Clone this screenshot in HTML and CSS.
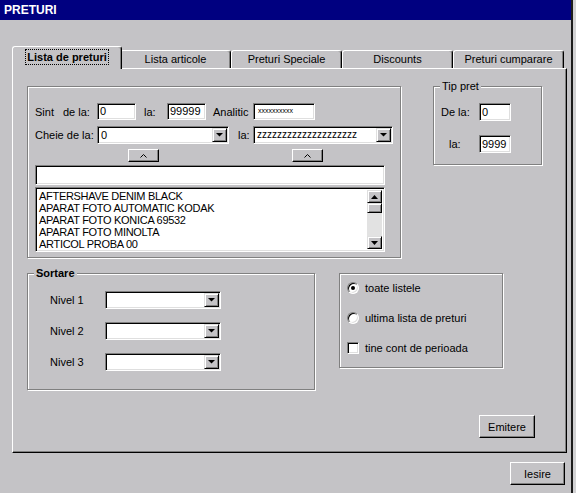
FILE: index.html
```html
<!DOCTYPE html>
<html lang="ro">
<head>
    <meta charset="UTF-8">
    <meta name="viewport" content="width=device-width, initial-scale=1.0">
    <title>PRETURI</title>
    <link rel="stylesheet" href="styles.css">
</head>
<body>
    <div class="window">
        <div class="titlebar">PRETURI</div>

        <div class="client">
            <div class="tabstrip">
                <div class="tab active"><span class="focus">Lista de preturi</span></div>
                <div class="tab">Lista articole</div>
                <div class="tab">Preturi Speciale</div>
                <div class="tab">Discounts</div>
                <div class="tab">Preturi cumparare</div>
            </div>

            <div class="page">
                <div class="top-row">
                    <!-- filtru articole -->
                    <div class="group filter">
                        <div class="row">
                            <span class="lbl-sint">Sint</span>
                            <span class="lbl-dela">de la:</span>
                            <div class="field w39">0</div>
                            <span class="lbl-la">la:</span>
                            <div class="field w39">99999</div>
                            <span class="lbl-analitic">Analitic</span>
                            <div class="field w62 tiny">xxxxxxxxxx</div>
                        </div>
                        <div class="row row-cheie">
                            <span class="lbl-cheie">Cheie de la:</span>
                            <div class="combo w132">
                                <span class="combo-text">0</span>
                                <span class="drop"><svg width="7" height="4" viewBox="0 0 7 4"><polygon points="0,0 7,0 3.5,3.5" fill="#000"/></svg></span>
                            </div>
                            <span class="lbl-la2">la:</span>
                            <div class="combo w140">
                                <span class="combo-text zz">zzzzzzzzzzzzzzzzzzzz</span>
                                <span class="drop"><svg width="7" height="4" viewBox="0 0 7 4"><polygon points="0,0 7,0 3.5,3.5" fill="#000"/></svg></span>
                            </div>
                        </div>
                        <div class="row row-up">
                            <button class="btn up up-1"><svg width="7" height="4" viewBox="0 0 7 4"><polyline points="0.5,3.5 3.5,0.5 6.5,3.5" fill="none" stroke="#000"/></svg></button>
                            <button class="btn up up-2"><svg width="7" height="4" viewBox="0 0 7 4"><polyline points="0.5,3.5 3.5,0.5 6.5,3.5" fill="none" stroke="#000"/></svg></button>
                        </div>
                        <div class="field search"></div>
                        <div class="listbox">
                            <ul class="items">
                                <li>AFTERSHAVE DENIM BLACK</li>
                                <li>APARAT FOTO AUTOMATIC KODAK</li>
                                <li>APARAT FOTO KONICA 69532</li>
                                <li>APARAT FOTO MINOLTA</li>
                                <li>ARTICOL PROBA 00</li>
                            </ul>
                            <div class="scrollbar">
                                <span class="sb-btn"><svg width="7" height="4" viewBox="0 0 7 4"><polygon points="0,4 7,4 3.5,0" fill="#000"/></svg></span>
                                <span class="sb-thumb"></span>
                                <span class="sb-track"></span>
                                <span class="sb-btn"><svg width="7" height="4" viewBox="0 0 7 4"><polygon points="0,0 7,0 3.5,4" fill="#000"/></svg></span>
                            </div>
                        </div>
                    </div>

                    <!-- tip pret -->
                    <div class="group tip">
                        <span class="group-title">Tip pret</span>
                        <div class="row">
                            <span class="lbl-tip">De la:</span>
                            <div class="field w32">0</div>
                        </div>
                        <div class="row">
                            <span class="lbl-tip indent">la:</span>
                            <div class="field w32">9999</div>
                        </div>
                    </div>
                </div>

                <div class="bottom-row">
                    <div class="group sortare">
                        <span class="group-title bold">Sortare</span>
                        <div class="row">
                            <span class="nivel">Nivel 1</span>
                            <div class="combo w116"><span class="combo-text"></span><span class="drop"><svg width="7" height="4" viewBox="0 0 7 4"><polygon points="0,0 7,0 3.5,3.5" fill="#000"/></svg></span></div>
                        </div>
                        <div class="row">
                            <span class="nivel">Nivel 2</span>
                            <div class="combo w116"><span class="combo-text"></span><span class="drop"><svg width="7" height="4" viewBox="0 0 7 4"><polygon points="0,0 7,0 3.5,3.5" fill="#000"/></svg></span></div>
                        </div>
                        <div class="row">
                            <span class="nivel">Nivel 3</span>
                            <div class="combo w116"><span class="combo-text"></span><span class="drop"><svg width="7" height="4" viewBox="0 0 7 4"><polygon points="0,0 7,0 3.5,3.5" fill="#000"/></svg></span></div>
                        </div>
                    </div>

                    <div class="group options">
                        <div class="opt"><span class="radio checked"></span>toate listele</div>
                        <div class="opt"><span class="radio"></span>ultima lista de preturi</div>
                        <div class="opt"><span class="check"></span>tine cont de perioada</div>
                    </div>
                </div>

                <div class="actions">
                    <button class="btn emitere">Emitere</button>
                </div>
            </div>

            <div class="footer">
                <button class="btn iesire">Iesire</button>
            </div>
        </div>
    </div>
</body>
</html>
```

FILE: styles.css
```css
* {
    box-sizing: border-box;
}
html {
    background-color: #d2d2d4;
}
body {
    margin: 0;
    font-family: "Liberation Sans", Arial, sans-serif;
    font-size: 11px;
    color: #000;
}
.window {
    width: 573px;
    height: 493px;
    background-color: #c4c3c6;
    border-right: 2px solid #1c1c1c;
}
.titlebar {
    height: 20px;
    line-height: 20px;
    padding-left: 4px;
    background-color: #000080;
    color: #fff;
    font-size: 12px;
    font-weight: bold;
}
.client {
    padding: 26px 0 0 12px;
}

/* tabs */
.tabstrip {
    display: flex;
    align-items: flex-end;
    height: 22px;
    position: relative;
    z-index: 1;
}
.tab {
    width: 111px;
    height: 18px;
    line-height: 16px;
    text-align: center;
    background-color: #c4c3c6;
    border: 1px solid;
    border-color: #fff #000 transparent #fff;
    border-bottom: 0;
    border-radius: 3px 3px 0 0;
    box-shadow: inset -1px 0 #808080;
}
.tab.active {
    width: 110px;
    height: 23px;
    margin-bottom: -1px;
    margin-right: -2px;
    padding-top: 2px;
    line-height: 15px;
    font-weight: bold;
    position: relative;
    z-index: 2;
}
.focus {
    display: inline-block;
    border: 1px dotted #000;
    padding: 0 1px;
    line-height: 14px;
}

/* tab page */
.page {
    width: 555px;
    height: 385px;
    padding: 17px 0 0 14px;
    border: 1px solid;
    border-color: #fff #000 #000 #fff;
    box-shadow: inset -1px -1px #808080;
}
.top-row,
.bottom-row {
    display: flex;
    align-items: flex-start;
}
.bottom-row {
    margin-top: 15px;
}
.group {
    position: relative;
    border: 1px solid #808080;
    box-shadow: inset 1px 1px #fff, 1px 1px #fff;
}
.group-title {
    position: absolute;
    top: -7px;
    left: 6px;
    padding: 0 2px;
    line-height: 13px;
    background-color: #c4c3c6;
}
.bold {
    font-weight: bold;
}
.row {
    display: flex;
    align-items: center;
}

/* fields */
.field {
    height: 17px;
    line-height: 14px;
    padding: 0 2px;
    background-color: #fff;
    border: 1px solid;
    border-color: #808080 #fff #fff #808080;
    box-shadow: inset 1px 1px #000, inset -1px -1px #dfdfdf;
    white-space: nowrap;
    overflow: hidden;
}
.tiny {
    font-size: 7px;
    padding-left: 4px;
}
.w32 { width: 32px; height: 18px; line-height: 16px; }
.w39 { width: 39px; }
.w62 { width: 62px; }
.w116 { width: 116px; }
.w132 { width: 132px; }
.w140 { width: 140px; }

.combo {
    display: flex;
    height: 18px;
    padding: 1px;
    background-color: #fff;
    border: 1px solid;
    border-color: #808080 #fff #fff #808080;
    box-shadow: inset 1px 1px #000, inset -1px -1px #dfdfdf;
}
.combo-text {
    flex: 1;
    padding-left: 2px;
    line-height: 14px;
    white-space: nowrap;
    overflow: hidden;
}
.zz {
    font-size: 10px;
}
.drop {
    width: 15px;
    display: flex;
    align-items: center;
    justify-content: center;
    background-color: #c4c3c6;
    border: 1px solid;
    border-color: #dfdfdf #000 #000 #dfdfdf;
    box-shadow: inset 1px 1px #fff, inset -1px -1px #808080;
}

/* filter group */
.filter {
    width: 374px;
    height: 172px;
    padding: 16px 0 0 7px;
}
.lbl-sint { width: 28px; }
.lbl-dela { width: 34px; }
.lbl-la { width: 23px; margin-left: 8px; }
.lbl-analitic { width: 40px; margin-left: 7px; }
.lbl-cheie { width: 62px; }
.lbl-la2 { width: 15px; margin-left: 9px; }
.row-cheie {
    margin-top: 6px;
}
.row-up {
    margin-top: 5px;
    height: 13px;
}
.btn {
    height: 23px;
    padding: 0;
    background-color: #c4c3c6;
    font: inherit;
    color: #000;
    border: 1px solid;
    border-color: #fff #000 #000 #fff;
    box-shadow: inset -1px -1px #808080;
}
.up {
    width: 31px;
    height: 13px;
    display: flex;
    align-items: center;
    justify-content: center;
}
.up-1 { margin-left: 93px; }
.up-2 { margin-left: 133px; }
.search {
    width: 350px;
    height: 20px;
    margin-top: 3px;
}
.listbox {
    display: flex;
    width: 350px;
    height: 65px;
    margin-top: 2px;
    padding: 2px;
    background-color: #fff;
    border: 1px solid;
    border-color: #808080 #fff #fff #808080;
    box-shadow: inset 1px 1px #000, inset -1px -1px #dfdfdf;
}
.items {
    flex: 1;
    margin: 0;
    padding: 0 0 0 1px;
    list-style: none;
    line-height: 12px;
    letter-spacing: -0.3px;
    overflow: hidden;
}
.scrollbar {
    width: 15px;
    display: flex;
    flex-direction: column;
}
.sb-btn,
.sb-thumb {
    display: flex;
    align-items: center;
    justify-content: center;
    height: 13px;
    background-color: #c4c3c6;
    border: 1px solid;
    border-color: #dfdfdf #000 #000 #dfdfdf;
    box-shadow: inset 1px 1px #fff, inset -1px -1px #808080;
}
.sb-thumb {
    height: 10px;
}
.sb-track {
    flex: 1;
    background-color: #e2e2e2;
}

/* tip pret */
.tip {
    width: 109px;
    height: 79px;
    margin-left: 32px;
    padding: 16px 0 0 7px;
}
.tip .row + .row {
    margin-top: 14px;
}
.lbl-tip { width: 38px; }
.indent { padding-left: 8px; }

/* sortare */
.sortare {
    width: 288px;
    height: 117px;
    padding: 17px 0 0 22px;
}
.sortare .row + .row {
    margin-top: 13px;
}
.nivel { width: 55px; }

/* optiuni */
.options {
    width: 164px;
    height: 95px;
    margin-left: 24px;
    padding: 7px 0 0 7px;
}
.opt {
    display: flex;
    align-items: center;
    height: 14px;
}
.opt + .opt {
    margin-top: 16px;
}
.radio,
.check {
    width: 12px;
    height: 12px;
    margin-right: 6px;
    display: flex;
    align-items: center;
    justify-content: center;
    background-color: #fff;
    border: 1px solid;
    border-color: #808080 #fff #fff #808080;
    box-shadow: inset 1px 1px #000, inset -1px -1px #dfdfdf;
}
.radio {
    border-radius: 50%;
}
.radio.checked::after {
    content: "";
    width: 4px;
    height: 4px;
    border-radius: 50%;
    background-color: #000;
}

/* buttons */
.actions {
    display: flex;
    justify-content: flex-end;
    margin-top: 25px;
    padding-right: 31px;
}
.emitere { width: 56px; }
.footer {
    width: 555px;
    display: flex;
    justify-content: flex-end;
    margin-top: 9px;
    padding-right: 2px;
}
.iesire { width: 55px; }
```
